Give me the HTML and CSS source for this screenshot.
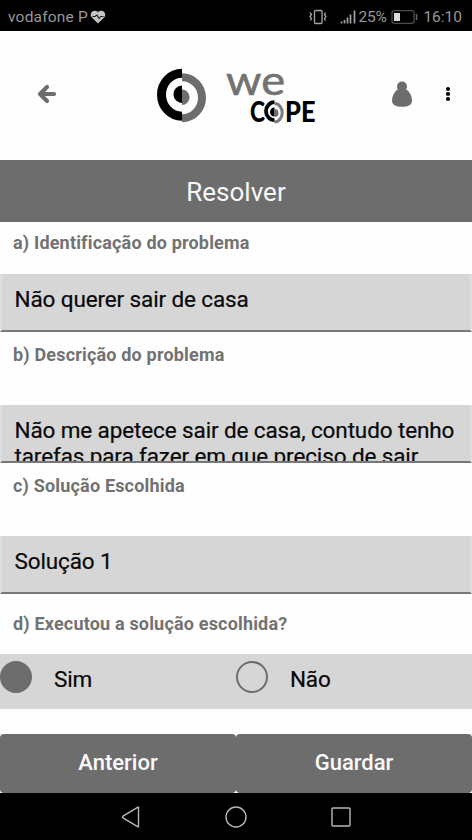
FILE: index.html
```html
<!DOCTYPE html>
<html lang="pt">
<head>
<meta charset="utf-8">
<title>Resolver</title>
<link rel="stylesheet" href="styles.css">
</head>
<body>
<div class="status">
  <span class="carrier">vodafone P</span>
  <svg class="heart" width="16" height="14" viewBox="0 0 16 14"><path d="M8 13.500 1.600 7.200C-1.400 3.300 3.800-1.800 8 2.200c4.200-4 9.400 1.100 6.400 5z" fill="#c4c4c4"/><path d="M2.500 6.500h2.500l2-1.500 2 3.500 1.700-2h3" fill="none" stroke="#222" stroke-width="1.100"/></svg>
  <svg class="signals" width="50" height="20" viewBox="0 0 50 20" fill="none" stroke="#a2a2a2"><rect x="5.500" y="3.500" width="7.500" height="13" rx="1" stroke-width="1.300"/><path d="M1 5.500l1.500 2-1.500 2 1.500 2-1 2M16.500 5.500l-1 2 1.500 2-1.500 2 1 2" stroke-width="1.300"/><path d="M32.500 14.500v2M35.500 13v3.500M38.500 10.500v6M41.500 7.500v9M45.500 3.500v13" stroke-width="1.700"/></svg>
  <span class="percent">25%</span>
  <svg class="battery" width="28" height="14" viewBox="0 0 28 14"><rect x="1" y=".7" width="22" height="12.600" rx="2" fill="none" stroke="#4c4c4c" stroke-width="1.300"/><path d="M3 3h6v8H3z" fill="#ddd"/><path d="M25.500 4v6" stroke="#666" stroke-width="1.500"/></svg>
  <span class="clock">16:10</span>
</div>
<header class="header">
  <svg class="back" width="20" height="20" viewBox="0 0 20 20" fill="none" stroke="#6d6d6d" stroke-width="4.200" stroke-linecap="round" stroke-linejoin="round"><path d="M10 3 3 10l7 7M4 10h13"/></svg>
  <svg class="logo" width="170" height="80" viewBox="0 -10 170 80">
    <g fill="none"><path d="M26 7.200a20.500 21.500 0 0 0 0 43" stroke="#000" stroke-width="9"/><path d="M26 11.200a20 20.500 0 0 1 0 41" stroke="#6d6d6d" stroke-width="8"/></g>
    <path d="M26 19.500a8.500 8.700 0 0 0 0 17.400z" fill="#000"/><path d="M26 23.500a7.500 7.700 0 0 1 0 15.400z" fill="#6d6d6d"/>
    <text class="we" x="70" y="28.500" textLength="59" lengthAdjust="spacingAndGlyphs">we</text>
    <text class="cope" x="94" y="55.500" textLength="15" lengthAdjust="spacingAndGlyphs">C</text>
    <g fill="none" stroke-width="3.800"><path d="M118.500 36.200a8.500 9 0 0 0 0 18" stroke="#000"/><path d="M118.500 37.500a7.500 9 0 0 1 0 18.500" stroke="#7a7a7a" stroke-width="3"/></g>
    <path d="M118.500 41.500a4.500 4.500 0 0 0 0 9z" fill="#000"/><path d="M118.500 43a4 4 0 0 1 0 8z" fill="#6d6d6d"/>
    <text class="cope" x="129" y="55.500" textLength="30.500" lengthAdjust="spacingAndGlyphs">PE</text>
  </svg>
  <svg class="person" width="20" height="26" viewBox="0 0 20 26" fill="#6d6d6d"><circle cx="10" cy="5.500" r="5"/><path d="M6 8C2 11 0 15 0 19.500 0 24 4 25.800 10 25.800S20 24 20 19.500C20 15 18 11 14 8z"/></svg>
  <svg class="more" width="6" height="16" viewBox="0 0 6 16"><circle cx="3" cy="3" r="2.100"/><circle cx="3" cy="8" r="2.100"/><circle cx="3" cy="13" r="2.100"/></svg>
</header>
<h1 class="title"><span>Resolver</span></h1>
<main class="form">
  <div class="label label-a"><span>a) Identificação do problema</span></div>
  <div class="field"><span>Não querer sair de casa</span></div>
  <div class="label label-b"><span>b) Descrição do problema</span></div>
  <div class="field"><span>Não me apetece sair de casa, contudo tenho<br>tarefas para fazer em que preciso de sair</span></div>
  <div class="label label-c"><span>c) Solução Escolhida</span></div>
  <div class="field"><span>Solução 1</span></div>
  <div class="label label-d"><span>d) Executou a solução escolhida?</span></div>
  <div class="options">
    <div class="option"><i class="radio checked"></i><span>Sim</span></div>
    <div class="option"><i class="radio"></i><span>Não</span></div>
  </div>
</main>
<div class="actions"><button>Anterior</button><button>Guardar</button></div>
<nav class="nav">
  <svg width="20" height="24" viewBox="0 0 20 24"><path d="M17.500 2.500v19q0 .5-.5.300L2 12.800q-1-.8 0-1.600L17 2.200q.5-.2.500.3z"/></svg>
  <svg width="22" height="24" viewBox="0 0 22 24"><circle cx="11" cy="12" r="10"/></svg>
  <svg width="20" height="24" viewBox="0 0 20 24"><rect x="1" y="3" width="18" height="18" rx="1"/></svg>
</nav>
</body>
</html>
```
FILE: styles.css
```css
* { box-sizing: border-box; }
body { margin: 0; width: 472px; height: 840px; overflow: hidden; background: #fefefe; font-family: Roboto, "Liberation Sans", sans-serif; color: #080808; display: flex; flex-direction: column; }
svg { display: block; flex: none; overflow: visible; }
.status { height: 31px; flex: none; background: #000; color: #989898; display: flex; align-items: center; padding: 2px 10px 0 8px; font-size: 15.5px; white-space: nowrap; }
.carrier { width: 82px; letter-spacing: .2px; }
.signals { margin-left: 203px; }
.percent { width: 33px; letter-spacing: -.2px; }
.battery { margin-right: 4px; }
.header { height: 129px; flex: none; display: flex; align-items: flex-start; }
.back { margin: 53px 0 0 37px; }
.logo { margin: 25px 0 0 99px; }
.we { font: 400 41px Lato, sans-serif; fill: #727272; stroke: #727272; stroke-width: .6px; }
.cope { font: 900 29px Lato, sans-serif; fill: #000; }
.person { margin: 50px 0 0 66px; }
.more { margin: 55px 0 0 33px; }
.title { height: 62px; flex: none; margin: 0; padding-top: 2px; background: #6d6d6d; color: #f8f8f8; display: flex; align-items: center; justify-content: center; font-size: 26px; font-weight: 400; }
.label { padding: 0 13px; color: #727272; font-size: 18px; font-weight: 700; letter-spacing: .18px; line-height: 24px; white-space: nowrap; }
.label-a { height: 52px; padding-top: 9px; }
.label-b { height: 73px; padding-top: 11px; }
.label-c { height: 73px; padding-top: 11px; }
.label-d { height: 60px; padding-top: 18px; }
.field { height: 58px; overflow: hidden; background: #d6d6d6; border: 2px solid #dedede; border-top: 0; border-bottom: 2px solid #777; padding: 12px 13px 0 12.5px; font-size: 22.5px; letter-spacing: -.12px; line-height: 26px; white-space: nowrap; -webkit-text-stroke: .2px #080808; }
.options { height: 55px; background: #d6d6d6; display: grid; grid-template-columns: 1fr 1fr; font-size: 22.5px; letter-spacing: -.2px; -webkit-text-stroke: .2px #080808; }
.option { display: flex; align-items: flex-start; gap: 22px; line-height: 51px; }
.radio { width: 32px; height: 32px; margin-top: 7px; border: 2px solid #6d6d6d; border-radius: 50%; }
.checked { background: #6d6d6d; }
.actions { height: 59px; margin-top: 25px; flex: none; display: grid; grid-template-columns: 1fr 1fr; }
button { border: 0; border-radius: 4px; background: #6d6d6d; color: #fafafa; font: 500 22px Roboto, sans-serif; padding: 0 0 2px; }
.nav { height: 47px; flex: none; background: #000; display: flex; align-items: center; gap: 84px; padding-left: 121px; }
.nav svg { fill: none; stroke: #b8b8b8; stroke-width: 1.4; }
```
